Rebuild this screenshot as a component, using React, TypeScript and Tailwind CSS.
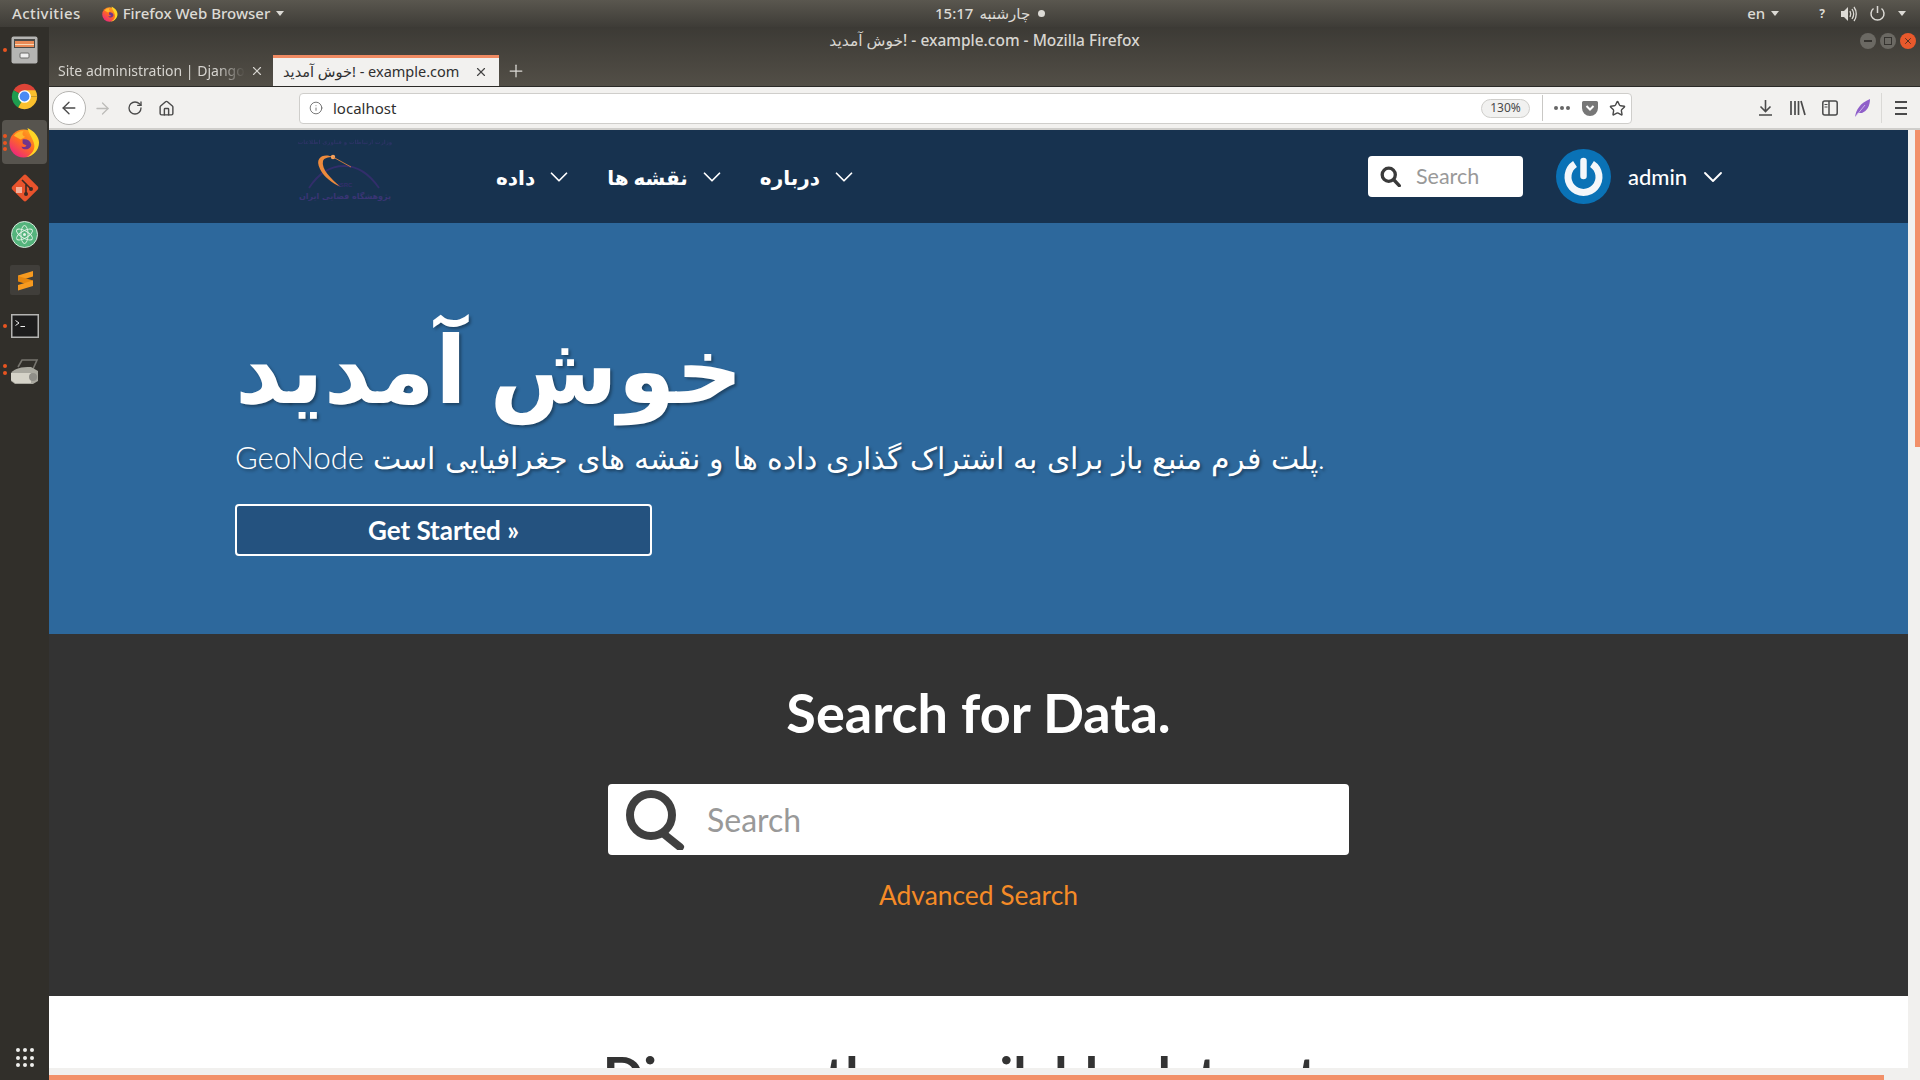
import React from 'react';
import { ChevronDown, Home, Info, RotateCw, Star, X, Plus, ArrowLeft, ArrowRight } from 'lucide-react';

const FirefoxLogo = ({ size }: { size: number }) => (
  <svg width={size} height={size} viewBox="0 0 32 32">
    <defs>
      <linearGradient id="ffa" x1="0.8" y1="0.1" x2="0.2" y2="0.9">
        <stop offset="0" stopColor="#ffa21f" />
        <stop offset="0.5" stopColor="#ff6a22" />
        <stop offset="1" stopColor="#ee2a78" />
      </linearGradient>
    </defs>
    <circle cx="15" cy="17" r="14.500" fill="url(#ffa)" />
    <path d="M19 1c7 3 12 9 12 15 0 8-6 14-13 15 6-3 9-8 8-13-1-6-5-10-7-17z" fill="#ffd426" />
    <path d="M14 13c4-1 8 1 9 5 0 3-3 5-5 5-3 0-5-1-5-3 2 1 4 1 5-1-2-1-4-1-4-3z" fill="#5b2a9e" opacity="0.85" />
    <path d="M5 9c2-3 6-5 10-5-2 3-1 5 2 6l-5 3z" fill="#ffb52c" />
  </svg>
);

const DockDot = ({ top }: { top: number }) => (
  <span className="absolute left-[3px] h-[4px] w-[4px] rounded-full bg-[#e95420]" style={{ top }} />
);

const DockItem = ({ dots, active, children }: { dots: number[]; active?: boolean; children: React.ReactNode }) => (
  <div className="relative flex h-[46px] w-[49px] items-center justify-center">
    {active && <span className="absolute inset-x-[2px] inset-y-[1px] rounded bg-[#57544e]" />}
    {dots.map((d) => (
      <DockDot key={d} top={d} />
    ))}
    <span className="relative flex">{children}</span>
  </div>
);

const Dock = () => (
  <aside className="flex w-[49px] shrink-0 flex-col bg-[#312f2a]">
    <DockItem dots={[21]}>
      <svg width="27" height="28" viewBox="0 0 27 28">
        <rect x="0.5" y="0.5" width="26" height="27" rx="2" fill="#b5b5b3" />
        <rect x="3" y="3" width="21" height="9" fill="#4a4a48" />
        <rect x="4" y="5" width="19" height="6" fill="#e98a56" />
        <rect x="4" y="8" width="19" height="1" fill="#f6d8b8" />
        <rect x="9" y="17" width="9" height="5" rx="1" fill="#efefef" stroke="#6a6a68" />
      </svg>
    </DockItem>
    <DockItem dots={[]}>
      <svg width="29" height="29" viewBox="0 0 32 32">
        <path d="M16 16 3.9 9A14 14 0 0 1 28.1 9z" fill="#dd4437" />
        <path d="M16 16 9 28.1A14 14 0 0 1 3.9 9z" fill="#1e9c4f" />
        <path d="M16 16h14A14 14 0 0 1 9 28.1z" fill="#fbc02d" />
        <path d="M16 9h12.1A14 14 0 0 1 30 16h-8z" fill="#fbc02d" />
        <circle cx="16" cy="16" r="7" fill="#fff" />
        <circle cx="16" cy="16" r="5.4" fill="#4a8af4" />
      </svg>
    </DockItem>
    <DockItem dots={[15, 22, 28]} active>
      <FirefoxLogo size={31} />
    </DockItem>
    <DockItem dots={[]}>
      <svg width="30" height="30" viewBox="0 0 30 30">
        <rect x="5" y="5" width="20" height="20" rx="2" transform="rotate(45 15 15)" fill="#e8532c" />
        <path d="M12 7l9 9M16 11v9M16 11l5 5" stroke="#3a2a24" strokeWidth="1.6" fill="none" />
        <circle cx="16" cy="21" r="2" fill="#3a2a24" />
        <circle cx="21" cy="16" r="2" fill="#3a2a24" />
        <rect x="6" y="14" width="6" height="6" fill="#f1c8b8" opacity="0.8" />
      </svg>
    </DockItem>
    <DockItem dots={[]}>
      <svg width="27" height="27" viewBox="0 0 27 27">
        <circle cx="13.5" cy="13.5" r="13" fill="#54b47c" stroke="#d7e8dc" />
        <g fill="none" stroke="#e4f3e8" strokeWidth="0.9">
          <ellipse cx="13.5" cy="13.5" rx="9" ry="3.6" transform="rotate(30 13.5 13.5)" />
          <ellipse cx="13.5" cy="13.5" rx="9" ry="3.6" transform="rotate(-30 13.5 13.5)" />
          <ellipse cx="13.5" cy="13.5" rx="9" ry="3.6" transform="rotate(90 13.5 13.5)" />
        </g>
        <circle cx="13.5" cy="13.5" r="1.5" fill="#e4f3e8" />
      </svg>
    </DockItem>
    <DockItem dots={[]}>
      <svg width="30" height="30" viewBox="0 0 30 30">
        <rect width="30" height="30" rx="2" fill="#403e3a" />
        <path d="M23 6v5.500L8 16v-5.500z" fill="#f79a1f" />
        <path d="M8 11 23 15.500V21L8 16.500z" fill="#e5860f" />
        <path d="M23 15.500V21L8 25.500V20z" fill="#f79a1f" />
      </svg>
    </DockItem>
    <DockItem dots={[21]}>
      <svg width="28" height="24" viewBox="0 0 28 24">
        <rect x="0.75" y="0.75" width="26.500" height="22.500" fill="#1d1d1d" stroke="#b4b4b2" strokeWidth="1.500" />
        <path d="M4.500 6.500 8 9l-3.500 2.500" stroke="#eee" strokeWidth="1" fill="none" />
        <path d="M9.500 12.500h4.500" stroke="#eee" strokeWidth="1" />
      </svg>
    </DockItem>
    <DockItem dots={[15, 22]}>
      <svg width="29" height="26" viewBox="0 0 29 26">
        <path d="M8 8 12 1h15l-4 9" fill="none" stroke="#77756f" strokeWidth="1.6" />
        <path d="M1 14c4-5 10-6 20-6l7 4v10l-5 3H5l-4-3z" fill="#a9a89f" />
        <path d="M1 14h20v10H5l-4-3z" fill="#d5d3c8" />
        <circle cx="23" cy="18" r="4" fill="#8f8e88" />
      </svg>
    </DockItem>
    <div className="mt-auto grid h-[32px] grid-cols-3 content-start justify-items-center px-[14px]">
      {Array.from({ length: 9 }).map((_, i) => (
        <span key={i} className="mb-[3.5px] h-[4px] w-[4px] rounded-full bg-[#efefec]" />
      ))}
    </div>
  </aside>
);

const TopBar = () => (
  <header className="flex h-[27px] shrink-0 items-center bg-gradient-to-b from-[#5a574f] to-[#3e3c37] font-['Noto_Sans','DejaVu_Sans',sans-serif] text-[15px] font-medium text-[#dcdad5]">
    <div className="flex w-[935px] shrink-0 items-center">
      <span className="ml-[12px] tracking-[0.4px]">Activities</span>
      <span className="ml-[21px] flex">
        <FirefoxLogo size={16} />
      </span>
      <span className="ml-[5px]">Firefox Web Browser</span>
      <span className="ml-[6px] h-0 w-0 border-x-[4px] border-t-[5px] border-x-transparent border-t-[#dcdad5]" />
    </div>
    <span className="flex items-center gap-[6px]">
      <span>15:17</span>
      <span>چارشنبه</span>
      <span className="ml-[2px] h-[7px] w-[7px] rounded-full bg-[#dcdad5]" />
    </span>
    <div className="ml-auto flex items-center pr-[14px]">
      <span>en</span>
      <span className="ml-[6px] h-0 w-0 border-x-[4px] border-t-[5px] border-x-transparent border-t-[#dcdad5]" />
      <span className="ml-[40px] text-[12px] font-bold">?</span>
      <svg className="ml-[15px]" width="17" height="16" viewBox="0 0 17 16" fill="#dcdad5">
        <path d="M1 5h3l4-4v14l-4-4H1z" />
        <path d="M10 5c1 2 1 4 0 6M12 3c2 3 2 7 0 10M14 1c3 4 3 10 0 14" fill="none" stroke="#dcdad5" strokeWidth="1.3" />
      </svg>
      <svg className="ml-[12px]" width="17" height="17" viewBox="0 0 17 17" fill="none" stroke="#dcdad5" strokeWidth="1.5">
        <path d="M8.5 1v7" />
        <path d="M4.5 3.5a6.5 6.5 0 1 0 8 0" />
      </svg>
      <span className="ml-[12px] h-0 w-0 border-x-[4px] border-t-[5px] border-x-transparent border-t-[#dcdad5]" />
    </div>
  </header>
);

const WindowButton = ({ close, children }: { close?: boolean; children: React.ReactNode }) => (
  <span
    className={
      close
        ? 'flex h-[16px] w-[16px] items-center justify-center rounded-full bg-[#e9592c] text-[#3b2a20]'
        : 'flex h-[16px] w-[16px] items-center justify-center rounded-full bg-[#6b6963] text-[#35332f]'
    }
  >
    {children}
  </span>
);

const TitleBar = () => (
  <div className="relative flex h-[28px] items-center justify-center pb-[1px] font-['Noto_Sans','DejaVu_Sans',sans-serif] text-[15.500px] font-medium text-[#d8d6d1]">
    <span dir="ltr">خوش آمدید! - example.com - Mozilla Firefox</span>
    <div className="absolute right-[4px] top-[6px] flex gap-[4px]">
      <WindowButton>
        <span className="h-[1.5px] w-[8px] bg-current" />
      </WindowButton>
      <WindowButton>
        <span className="h-[8px] w-[8px] border border-current" />
      </WindowButton>
      <WindowButton close>
        <X size={10} strokeWidth={2} />
      </WindowButton>
    </div>
  </div>
);

const TabStrip = () => (
  <div className="flex h-[32px] items-stretch border-b border-[#2b2a27] font-['Noto_Sans','DejaVu_Sans',sans-serif] text-[14px]">
    <div className="flex w-[224px] items-center pl-[9px] text-[#d6d4cf]">
      <span className="w-[187px] overflow-hidden whitespace-nowrap [mask-image:linear-gradient(to_right,black_85%,transparent)]">Site administration | Django</span>
      <X className="ml-[5px]" size={14} />
    </div>
    <div className="flex w-[226px] items-center border-t-[3px] border-[#f08a62] bg-[#f2f1ef] pb-[1px] pl-[10px] text-[14.500px] text-[#2f2f2f]">
      <span className="w-[191px] overflow-hidden whitespace-nowrap" dir="ltr">خوش آمدید! - example.com</span>
      <X className="text-[#444]" size={14} />
    </div>
    <Plus className="ml-[7px] self-center text-[#dcdad5]" size={20} strokeWidth={1.5} />
  </div>
);

const ToolBar = () => (
  <div className="flex h-[43px] items-center border-b-2 border-[#cfcecb] bg-[#f2f1ef] pt-[1px] font-['Noto_Sans',sans-serif] text-[#4a4a4a]">
    <span className="ml-[3px] flex h-[34px] w-[34px] items-center justify-center rounded-full border border-[#b5b4b1] bg-white">
      <ArrowLeft size={20} strokeWidth={1.6} />
    </span>
    <ArrowRight className="ml-[7px] text-[#bdbcb9]" size={19} strokeWidth={1.6} />
    <RotateCw className="ml-[15px]" size={16} strokeWidth={2} />
    <Home className="ml-[15px]" size={17} strokeWidth={2} />
    <div className="ml-[124px] flex h-[31px] w-[1333px] items-center rounded border border-[#cfcecb] bg-white pl-[9px] pr-[5px]">
      <Info size={14} strokeWidth={1.5} className="text-[#666]" />
      <span className="ml-[10px] text-[15px] text-[#2f2f2f]">localhost</span>
      <span className="ml-auto flex h-[19px] w-[49px] items-center justify-center rounded-full border border-[#cfcecb] bg-[#f1f1f0] text-[12px]">130%</span>
      <span className="ml-[12px] h-[26px] w-px bg-[#c9c8c5]" />
      <span className="ml-[11px] flex gap-[2px]">
        <span className="h-[4px] w-[4px] rounded-full bg-[#666]" />
        <span className="h-[4px] w-[4px] rounded-full bg-[#666]" />
        <span className="h-[4px] w-[4px] rounded-full bg-[#666]" />
      </span>
      <svg className="ml-[12px]" width="16" height="15" viewBox="0 0 16 15">
        <path d="M1.500 0h13A1.500 1.500 0 0 1 16 1.500V7a8 8 0 0 1-16 0V1.500A1.500 1.500 0 0 1 1.500 0z" fill="#777" />
        <path d="M4.500 5 8 8.500 11.500 5" stroke="#fff" strokeWidth="2" fill="none" />
      </svg>
      <Star className="ml-[11px]" size={17} strokeWidth={2} />
    </div>
    <div className="ml-[127px] flex items-center">
      <svg width="13" height="16" viewBox="0 0 13 16" fill="none" stroke="#4a4a4a" strokeWidth="1.6">
        <path d="M6.500 0v11M1.500 6.500l5 5 5-5M0 15h13" />
      </svg>
      <svg className="ml-[18px]" width="16" height="16" viewBox="0 0 16 16" fill="none" stroke="#4a4a4a" strokeWidth="1.700">
        <path d="M1 1v14M5 1v14M8.500 1v14M11 1l4 14" />
      </svg>
      <svg className="ml-[16px]" width="16" height="16" viewBox="0 0 16 16" fill="none" stroke="#4a4a4a" strokeWidth="1.500">
        <rect x="0.800" y="1" width="14.400" height="14" rx="2" />
        <path d="M7 1v14" />
        <path d="M2.500 4.500h3M2.500 7h3" strokeWidth="1" />
      </svg>
      <svg className="ml-[17px]" width="15" height="18" viewBox="0 0 15 18">
        <path d="M0 18C1 11 5 4 15 0c0 7-3 12-8 14l-4 0z" fill="#8f5fc9" />
        <path d="M1 17 10 6" stroke="#d9c8ef" strokeWidth="0.800" />
      </svg>
      <span className="ml-[11px] h-[30px] w-px bg-[#dad9d6]" />
      <span className="ml-[13px] flex w-[12px] flex-col gap-[4px]">
        <span className="h-[2px] bg-[#4a4a4a]" />
        <span className="h-[2px] bg-[#4a4a4a]" />
        <span className="h-[2px] bg-[#4a4a4a]" />
      </span>
    </div>
  </div>
);

const SiteLogo = () => (
  <div className="mb-[12px] flex h-[68px] w-[90px] shrink-0 flex-col items-center font-['DejaVu_Sans',sans-serif] font-bold text-[#3a3575]">
    <span className="whitespace-nowrap text-[5.500px] leading-[10px] opacity-60">وزارت ارتباطات و فناوری اطلاعات</span>
    <svg className="mt-[5px]" width="90" height="38" viewBox="0 0 90 38">
      <path d="M9 36C20 19 32 14 44 14s24 6 35 22" fill="none" stroke="#322e6b" strokeWidth="1.800" />
      <path d="M33 5C24 1 14 5 20 17c4 8 12 14 21 18C31 27 21 17 23 9c1-3 5-4 10-4z" fill="#ee8a3c" />
      <circle cx="33" cy="5" r="2.200" fill="#f6a25e" />
      <path d="M33 5 51 15" stroke="#ee8a3c" strokeWidth="0.800" />
      <text x="38" y="35" fontSize="6" fontWeight="700" fill="#322e6b" fontFamily="Liberation Sans">ISRC</text>
    </svg>
    <span className="whitespace-nowrap text-[8px] leading-[14px]">پژوهشگاه فضایی ایران</span>
  </div>
);

const NavItem = ({ label, className }: { label: string; className: string }) => (
  <div className={`flex items-center ${className}`}>
    <span className="font-['Lato','DejaVu_Sans',sans-serif] text-[20px] font-bold text-white">{label}</span>
    <ChevronDown className="ml-[9px] text-white" size={30} strokeWidth={1.400} />
  </div>
);

const NavBar = () => (
  <nav className="flex h-[93px] shrink-0 items-center bg-[#17324f] pl-[251px]">
    <SiteLogo />
    <NavItem label="داده" className="ml-[106px]" />
    <NavItem label="نقشه ها" className="ml-[33px]" />
    <NavItem label="درباره" className="ml-[33px]" />
    <div className="ml-[509px] flex h-[41px] w-[155px] shrink-0 items-center rounded bg-white pl-[12px]">
      <svg width="21" height="21" viewBox="0 0 24 24" fill="none" stroke="#3a3a3a" strokeWidth="3.800" strokeLinecap="round">
        <circle cx="10" cy="10" r="7.500" />
        <path d="m16 16 6 6.500" />
      </svg>
      <input
        className="ml-[15px] w-[100px] bg-transparent font-['Lato',sans-serif] text-[21.500px] text-[#333] outline-none placeholder:text-[#999]"
        placeholder="Search"
      />
    </div>
    <svg className="ml-[33px] shrink-0" width="55" height="55" viewBox="0 0 55 55">
      <circle cx="27.500" cy="27.500" r="27.500" fill="#0a72b6" />
      <path d="M19 15a15.500 15.500 0 1 0 17 0" fill="none" stroke="#f4f7fa" strokeWidth="7" />
      <path d="M27.500 12v15" stroke="#f4f7fa" strokeWidth="6.500" strokeLinecap="round" />
    </svg>
    <span className="ml-[17px] font-['Lato','DejaVu_Sans',sans-serif] text-[22px] font-medium text-white">admin</span>
    <ChevronDown className="ml-[10px] text-white" size={32} strokeWidth={1.400} />
  </nav>
);

const Hero = () => (
  <section className="h-[411px] shrink-0 bg-[#2d689c] pl-[186px] pt-[88px] text-white [text-shadow:2px_2px_3px_rgba(0,0,0,0.35)]">
    <h1 className="font-['Lato','DejaVu_Sans',sans-serif] text-[93px] font-bold leading-[112px]">خوش آمدید</h1>
    <p className="mt-[13px] font-['Lato','DejaVu_Sans',sans-serif] text-[30px] font-light leading-[42px] [word-spacing:1.100px]">
      <span className="text-[31px]">GeoNode</span> پلت فرم منبع باز برای به اشتراک گذاری داده ها و نقشه های جغرافیایی است.
    </p>
    <button className="mt-[26px] flex h-[52px] w-[417px] items-center justify-center rounded border-2 border-white bg-[#24527f] font-['Lato',sans-serif] text-[26px] font-bold">
      Get Started »
    </button>
  </section>
);

const SearchSection = () => (
  <section className="flex h-[362px] shrink-0 flex-col items-center bg-[#333333] pt-[47px] font-['Lato',sans-serif]">
    <h2 className="text-[54px] font-bold leading-[64px] text-white">Search for Data.</h2>
    <div className="mt-[39px] flex h-[71px] w-[741px] items-center rounded bg-white pl-[18px]">
      <svg width="60" height="60" viewBox="0 0 60 60" fill="none" stroke="#404040" strokeWidth="8" strokeLinecap="round">
        <circle cx="25" cy="25" r="21" />
        <path d="m39 45 15 12" />
      </svg>
      <input
        className="ml-[21px] flex-1 bg-transparent text-[32px] text-[#333] outline-none placeholder:text-[#999]"
        placeholder="Search"
      />
    </div>
    <a className="mt-[22px] text-[26.400px] leading-[36px] text-[#f58b27]">Advanced Search</a>
  </section>
);

export default function App() {
  return (
    <div className="flex h-[1080px] w-[1920px] flex-col overflow-hidden bg-[#3c3a35]">
      <TopBar />
      <div className="flex min-h-0 flex-1">
        <Dock />
        <div className="flex min-w-0 flex-1 flex-col">
          <div className="bg-gradient-to-b from-[#3c3a35] to-[#534f47]">
            <TitleBar />
            <TabStrip />
          </div>
          <ToolBar />
          <div className="flex min-h-0 flex-1 bg-[#f1f0ee]">
            <main className="flex min-w-0 flex-1 flex-col overflow-hidden bg-white">
              <NavBar />
              <Hero />
              <SearchSection />
              <div className="pt-[48px] text-center font-['Lato',sans-serif] text-[54px] font-bold leading-[64px] text-[#333]">Discover the available datasets.</div>
            </main>
            <div className="flex w-[12px] shrink-0 justify-end">
              <span className="h-[317px] w-[5px] bg-[#f29069]" />
            </div>
          </div>
          <div className="h-[12px] shrink-0 bg-[#f1f0ee] pt-[7px]">
            <div className="h-[5px] w-[1835px] bg-[#f29069]" />
          </div>
        </div>
      </div>
    </div>
  );
}
